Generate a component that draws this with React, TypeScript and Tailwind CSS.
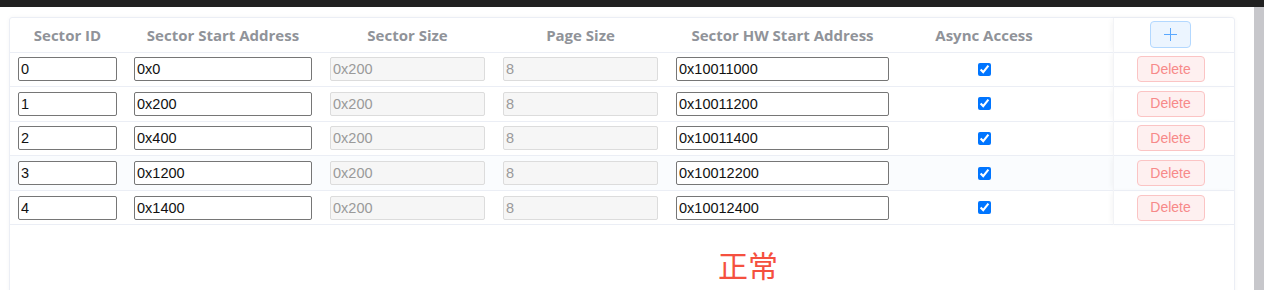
const rows = [
  { id: '0', start: '0x0', hw: '0x10011000' },
  { id: '1', start: '0x200', hw: '0x10011200' },
  { id: '2', start: '0x400', hw: '0x10011400' },
  { id: '3', start: '0x1200', hw: '0x10012200' },
  { id: '4', start: '0x1400', hw: '0x10012400' },
];

const inputCls =
  'w-full h-[24px] px-[2px] border border-[#767676] rounded-[2px] bg-white text-[14.5px] text-[#111] outline-none';
const disabledCls =
  'w-full h-[24px] px-[2px] border border-[#dcdcdc] rounded-[2px] bg-[#f6f6f6] text-[14.5px] text-[#9a9a9a] outline-none';

export default function App() {
  return (
    <div className="w-[1264px] h-[290px] overflow-hidden bg-white flex flex-col font-['Liberation_Sans',Arial,sans-serif]">
      {/* top bar */}
      <div className="h-[7px] bg-[#212121] shrink-0" />

      <div className="flex flex-1">
        <div className="flex-1 pl-[9px] pt-[10px]">
          <div className="w-[1226px] h-[400px] border border-[#ebeef5] rounded-[3px] shadow-[0_0_4px_rgba(0,0,0,0.04)]">
            <table className="table-fixed border-collapse w-[1224px]">
              <colgroup>
                <col className="w-[115px]" />
                <col className="w-[196px]" />
                <col className="w-[173px]" />
                <col className="w-[173px]" />
                <col className="w-[231px]" />
                <col className="w-[172px]" />
                <col className="w-[43px]" />
                <col className="w-[121px]" />
              </colgroup>
              <thead>
                <tr className="h-[34px] border-b border-[#ebeef5] text-[15px] text-[#909399] font-['Open_Sans',sans-serif]">
                  <th className="font-bold">Sector ID</th>
                  <th className="font-bold">Sector Start Address</th>
                  <th className="font-bold">Sector Size</th>
                  <th className="font-bold">Page Size</th>
                  <th className="font-bold">Sector HW Start Address</th>
                  <th className="font-bold">Async Access</th>
                  <th />
                  <th className="p-0 border-l border-[#f2f3f6] shadow-[-3px_0_6px_-2px_rgba(0,0,0,0.05)]">
                    <div className="flex pl-[36px]">
                      <button className="w-[41px] h-[27px] rounded-[4px] border border-[#b3d8ff] bg-[#ecf5ff] text-[#5aa8ff] flex items-center justify-center">
                        <svg width="15" height="15" viewBox="0 0 15 15" fill="none" stroke="currentColor" strokeWidth="1">
                          <path d="M7.5 1v13M1 7.5h13" />
                        </svg>
                      </button>
                    </div>
                  </th>
                </tr>
              </thead>
              <tbody>
                {rows.map((r, i) => (
                  <tr
                    key={r.id}
                    className={`h-[34.6px] border-b border-[#ebeef5] ${i === 3 ? 'bg-[#fafcfe]' : ''}`}
                  >
                    <td className="px-[8px]">
                      <input className={inputCls} defaultValue={r.id} />
                    </td>
                    <td className="px-[9px]">
                      <input className={inputCls} defaultValue={r.start} />
                    </td>
                    <td className="px-[9px]">
                      <input className={disabledCls} defaultValue="0x200" disabled />
                    </td>
                    <td className="px-[9px]">
                      <input className={disabledCls} defaultValue="8" disabled />
                    </td>
                    <td className="px-[9px]">
                      <input className={inputCls} defaultValue={r.hw} />
                    </td>
                    <td>
                      <input type="checkbox" defaultChecked className="block mx-auto" />
                    </td>
                    <td />
                    <td className="p-0 border-l border-[#f2f3f6] shadow-[-3px_0_6px_-2px_rgba(0,0,0,0.05)]">
                      <div className="flex pl-[23px]">
                        <button className="w-[68px] h-[26px] rounded-[4px] border border-[#fbc4c4] bg-[#fef0f0] text-[#f78989] text-[14px]">
                          Delete
                        </button>
                      </div>
                    </td>
                  </tr>
                ))}
              </tbody>
            </table>

            <div className="mt-[24px] ml-[708px] text-[30px] leading-[30px] text-[#f5503f] font-['Noto_Sans_CJK_SC',sans-serif]">
              正常
            </div>
          </div>
        </div>

        {/* scrollbar */}
        <div className="w-[10px] bg-[#c7c7cb] shrink-0" />
      </div>
    </div>
  );
}
